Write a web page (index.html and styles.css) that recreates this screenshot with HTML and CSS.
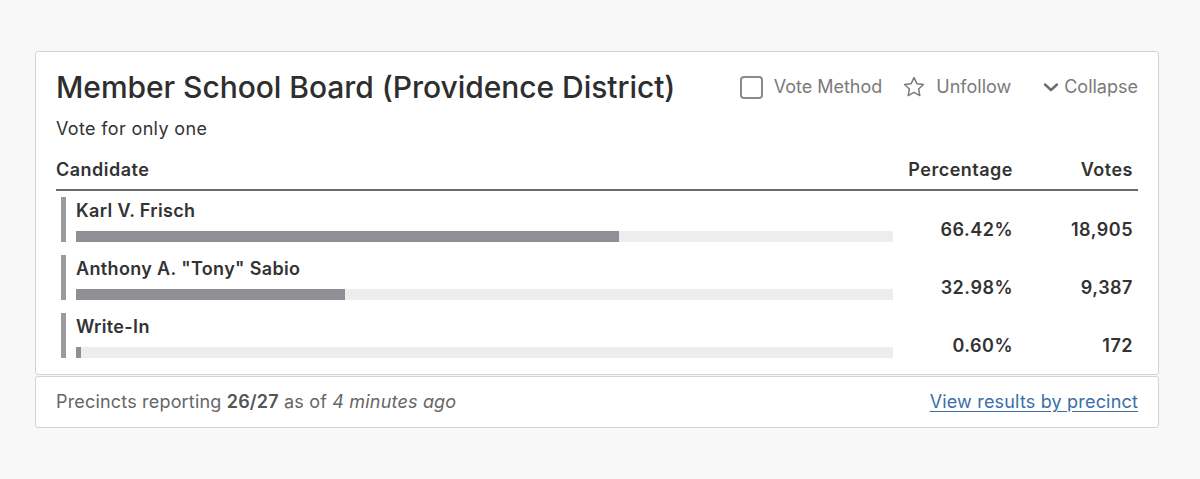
FILE: index.html
```html
<!DOCTYPE html>
<html lang="en">
<head>
<meta charset="utf-8">
<title>Member School Board (Providence District)</title>
<link rel="stylesheet" href="styles.css">
</head>
<body>
<div class="page">
  <section class="card">
    <header class="card-head">
      <h1 class="title">Member School Board (Providence District)</h1>
      <div class="actions">
        <span class="action">
          <span class="checkbox"></span>
          <span>Vote Method</span>
        </span>
        <span class="action action-follow">
          <svg class="star" width="24" height="24" viewBox="0 0 24 24" fill="none" stroke="#7a7a7a" stroke-width="1.5" stroke-linejoin="round"><path d="M12 2.6l2.85 6.05 6.6.8-4.87 4.55 1.25 6.55L12 17.3l-5.83 3.25 1.25-6.55L2.550 9.45l6.6-.8z"/></svg>
          <span>Unfollow</span>
        </span>
        <span class="action action-collapse">
          <svg class="chevron" width="16" height="12" viewBox="0 0 16 12" fill="none" stroke="#6a6a6a" stroke-width="2.4" stroke-linecap="round" stroke-linejoin="round"><path d="M2 3.5l6 5.5 6-5.5"/></svg>
          <span>Collapse</span>
        </span>
      </div>
    </header>
    <p class="instructions">Vote for only one</p>

    <div class="results">
      <div class="row row-head">
        <div class="cell">Candidate</div>
        <div class="cell num">Percentage</div>
        <div class="cell num">Votes</div>
      </div>
      <div class="rows">
        <div class="row">
          <div class="cand">
            <div class="name">Karl V. Frisch</div>
            <div class="track"><div class="fill" style="width:66.42%"></div></div>
          </div>
          <div class="cell num val">66.42%</div>
          <div class="cell num val">18,905</div>
        </div>
        <div class="row">
          <div class="cand">
            <div class="name">Anthony A. "Tony" Sabio</div>
            <div class="track"><div class="fill" style="width:32.98%"></div></div>
          </div>
          <div class="cell num val">32.98%</div>
          <div class="cell num val">9,387</div>
        </div>
        <div class="row">
          <div class="cand">
            <div class="name">Write-In</div>
            <div class="track"><div class="fill" style="width:0.6%"></div></div>
          </div>
          <div class="cell num val">0.60%</div>
          <div class="cell num val">172</div>
        </div>
      </div>
    </div>
  </section>
  <footer class="card-foot">
    <span class="reporting">Precincts reporting <b>26/27</b> as of <i>4 minutes ago</i></span>
    <a class="link" href="#">View results by precinct</a>
  </footer>
</div>
</body>
</html>
```

FILE: styles.css
```css
* { box-sizing: border-box; }

html, body {
  margin: 0;
  padding: 0;
  background: #f8f8f8;
}

body {
  font-family: Inter, "Noto Sans", "Liberation Sans", sans-serif;
  color: #333;
  font-size: 18px;
  line-height: 24px;
}

.page {
  padding: 51px 41px 0 35px;
}

.card {
  background: #fff;
  border: 1px solid #d3d3d3;
  border-radius: 3px;
  padding: 16px 20px 16px 20px;
}

.card-head {
  display: flex;
  align-items: center;
  justify-content: space-between;
}

.title {
  margin: 0;
  font-size: 30px;
  line-height: 38px;
  font-weight: 500;
  color: #2e2e2e;
  letter-spacing: -0.05px;
}

.actions {
  display: flex;
  align-items: center;
  color: #7a7a7a;
  font-size: 18px;
}

.action {
  display: flex;
  align-items: center;
}

.checkbox {
  width: 23px;
  height: 23px;
  border: 2px solid #8a8a8a;
  border-radius: 4px;
  margin-right: 11px;
}

.action-follow {
  margin-left: 20px;
}

.star {
  margin-right: 10px;
}

.action-collapse {
  margin-left: 32px;
}

.chevron {
  margin-right: 5px;
}

.instructions {
  margin: 11px 0 0 0;
  font-size: 18px;
  line-height: 24px;
  color: #333;
  letter-spacing: 0.35px;
}

.results {
  margin-top: 17px;
}

.row {
  display: grid;
  grid-template-columns: 1fr 125px 120px;
  align-items: end;
}

.row-head {
  font-weight: 600;
  color: #333;
  padding-bottom: 7px;
  border-bottom: 2px solid #6b6b6b;
  letter-spacing: 0.5px;
}

.num {
  text-align: right;
  padding-right: 5px;
}

.rows {
  display: flex;
  flex-direction: column;
  gap: 13px;
  padding-top: 6px;
}

.cand {
  margin-left: 5px;
  border-left: 5px solid #9a9ba0;
  padding-left: 10px;
}

.name {
  font-weight: 600;
  color: #333;
  line-height: 24px;
  padding-top: 2px;
  letter-spacing: 0.35px;
}

.track {
  margin-top: 8px;
  height: 11px;
  background: #ededed;
}

.fill {
  height: 100%;
  background: #8f9096;
}

.val {
  font-weight: 600;
  color: #333;
  letter-spacing: 0.5px;
}

.card-foot {
  margin-top: 1px;
  background: #fff;
  border: 1px solid #d3d3d3;
  border-radius: 3px;
  padding: 13px 20px 13px 20px;
  display: flex;
  justify-content: space-between;
  align-items: center;
  color: #666;
  letter-spacing: 0.18px;
}

.reporting b {
  font-weight: 600;
  color: #555;
}

.link {
  color: #3b6ea8;
  text-decoration: underline;
  text-underline-offset: 3px;
}
```
